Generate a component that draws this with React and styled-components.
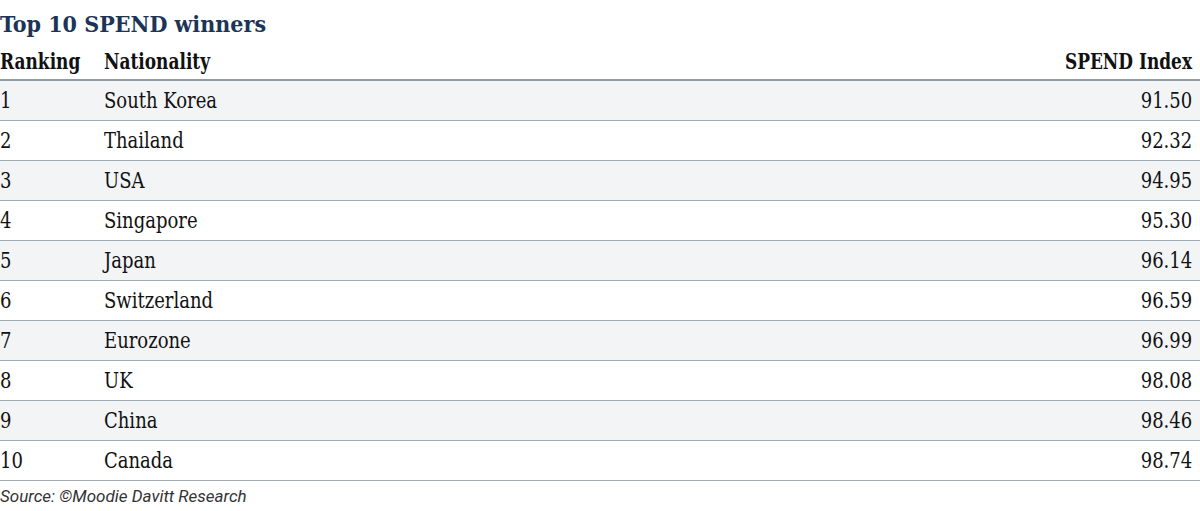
import React from "react";
import styled, { createGlobalStyle } from "styled-components";

const Global = createGlobalStyle`
  html, body { margin: 0; padding: 0; background: #ffffff; }
  body { font-family: "DejaVu Serif Condensed", "DejaVu Serif", serif; color: #111; }
`;

const Wrap = styled.div`
  width: 1200px;
  display: flex;
  flex-direction: column;
`;

const Title = styled.h2`
  margin: 0;
  height: 44px;
  display: flex;
  align-items: center;
  font-size: 23px;
  font-weight: 700;
  color: #1c3456;
  padding-top: 2px;
  box-sizing: border-box;
`;

const Row = styled.div`
  display: grid;
  grid-template-columns: 104px 1fr auto;
  align-items: center;
  padding-right: 8px;
  box-sizing: border-box;
  height: ${(p) => (p.$head ? "37px" : "40px")};
  border-bottom: ${(p) => (p.$head ? "2px solid #939ca4" : "1px solid #a3abb2")};
  background: ${(p) => (p.$alt ? "#f3f4f6" : "transparent")};
  font-size: 23px;
  line-height: 1;
  font-weight: ${(p) => (p.$head ? 700 : 400)};
  padding-bottom: ${(p) => (p.$head ? "3px" : "0")};
`;

const Cell = styled.span`
  display: block;
  text-align: ${(p) => (p.$right ? "right" : "left")};
  white-space: nowrap;
`;

const Narrow = styled.span`
  display: inline-block;
  transform: scaleX(${(p) => (p.$bold ? 0.82 : 0.87)});
  transform-origin: ${(p) => (p.$right ? "right" : "left")} center;
`;

const Source = styled.div`
  font-family: Roboto, "Liberation Sans", sans-serif;
  font-style: italic;
  font-size: 17px;
  color: #333;
  padding-top: 5px;
`;

const data = [
  ["South Korea", "91.50"],
  ["Thailand", "92.32"],
  ["USA", "94.95"],
  ["Singapore", "95.30"],
  ["Japan", "96.14"],
  ["Switzerland", "96.59"],
  ["Eurozone", "96.99"],
  ["UK", "98.08"],
  ["China", "98.46"],
  ["Canada", "98.74"],
];

function T({ children, right, bold }) {
  return (
    <Cell $right={right}>
      <Narrow $right={right} $bold={bold}>{children}</Narrow>
    </Cell>
  );
}

export default function App() {
  return (
    <Wrap>
      <Global />
      <Title>Top 10 SPEND winners</Title>
      <Row $head>
        <T bold>Ranking</T>
        <T bold>Nationality</T>
        <T bold right>SPEND Index</T>
      </Row>
      {data.map(([name, v], i) => (
        <Row key={name} $alt={i % 2 === 0}>
          <T>{i + 1}</T>
          <T>{name}</T>
          <T right>{v}</T>
        </Row>
      ))}
      <Source>Source: ©Moodie Davitt Research</Source>
    </Wrap>
  );
}
